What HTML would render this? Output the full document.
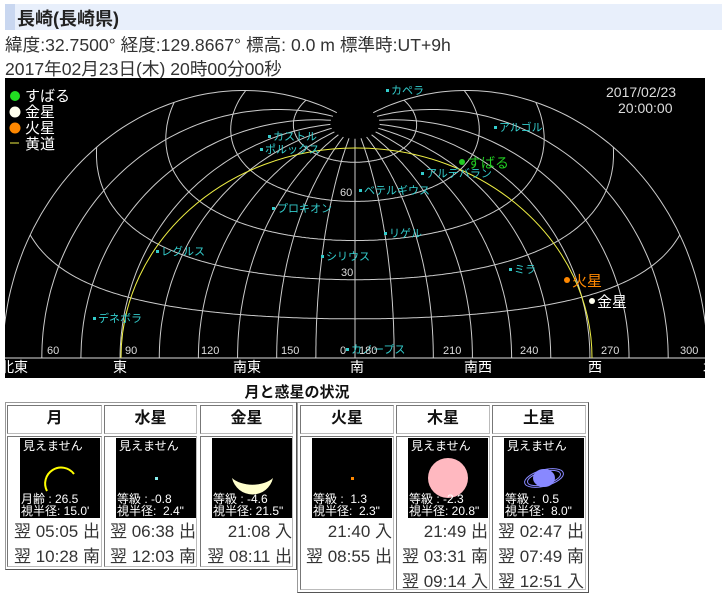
<!DOCTYPE html>
<html><head><meta charset="utf-8">
<style>
*{margin:0;padding:0;box-sizing:border-box}
body{width:722px;height:598px;background:#fff;font-family:"Liberation Sans","Noto Sans CJK JP",sans-serif;color:#333;position:relative;overflow:hidden}
.abs{position:absolute}
#hd{left:5px;top:4px;width:717px;height:26px;background:#e8effb;border-left:10px solid #c9d7f0}
#hd span{position:absolute;left:2px;top:1px;font-size:18px;font-weight:bold;color:#222}
.t{font-size:17.6px;white-space:nowrap}
.box{border:1px solid #999;border-right-color:#555;border-bottom-color:#555}
.cell{position:absolute;border:1px solid #777;border-right-color:#bbb;border-bottom-color:#bbb}
.h{font-size:16px;font-weight:bold;color:#111;text-align:center;line-height:26px}
.img{position:absolute;width:80px;height:80px;background:#000;color:#fff;font-size:12px;line-height:12px;overflow:hidden}
.img .a{position:absolute;left:3px;top:2px;white-space:nowrap}
.img .b{position:absolute;left:1px;top:55px;white-space:nowrap}
.img svg{position:absolute;left:0;top:0}
.r{position:absolute;font-size:17px;color:#333;white-space:nowrap;text-align:right}
</style></head><body>
<div id="hd" class="abs"><span>長崎(長崎県)</span></div>
<div class="abs t" style="left:5px;top:32px">緯度:32.7500° 経度:129.8667° 標高: 0.0 m 標準時:UT+9h</div>
<div class="abs t" style="left:5px;top:56px">2017年02月23日(木) 20時00分00秒</div>

<svg class="abs" style="left:5px;top:78px" width="700" height="300" viewBox="5 78 700 300" font-family="Liberation Sans,Noto Sans CJK JP,sans-serif">
<rect x="5" y="78" width="700" height="300" fill="#000"/>
<g id="grid" fill="none" stroke="#ccc" stroke-width="1"></g>
<line x1="5" y1="358" x2="705" y2="358" stroke="#ddd"/>
<path d="M121 358 C121 242 226 148 356 148 C486 148 592 242 592 358" fill="none" stroke="#ee4" stroke-width="1"/>
<g fill="#3cc" font-size="11">
<rect x="386" y="89" width="3" height="3"/><text x="391" y="94">カペラ</text>
<rect x="494" y="126" width="3" height="3"/><text x="499" y="131">アルゴル</text>
<rect x="268" y="135" width="3" height="3"/><text x="273" y="140">カストル</text>
<rect x="260" y="148" width="3" height="3"/><text x="265" y="153">ポルックス</text>
<rect x="421" y="172" width="3" height="3"/><text x="426" y="177">アルデバラン</text>
<rect x="359" y="189" width="3" height="3"/><text x="364" y="194">ベテルギウス</text>
<rect x="272" y="207" width="3" height="3"/><text x="277" y="212">プロキオン</text>
<rect x="384" y="232" width="3" height="3"/><text x="389" y="237">リゲル</text>
<rect x="156" y="250" width="3" height="3"/><text x="161" y="255">レグルス</text>
<rect x="321" y="255" width="3" height="3"/><text x="326" y="260">シリウス</text>
<rect x="509" y="268" width="3" height="3"/><text x="514" y="273">ミラ</text>
<rect x="93" y="317" width="3" height="3"/><text x="98" y="322">デネボラ</text>
<rect x="346" y="348" width="3" height="3"/><text x="351" y="353">カノープス</text>
</g>
<circle cx="462" cy="162" r="3" fill="#2c2"/><text x="467" y="168" fill="#2c2" font-size="14">すばる</text>
<circle cx="567" cy="280" r="3" fill="#f80"/><text x="572" y="286" fill="#f80" font-size="15">火星</text>
<circle cx="592" cy="301" r="3" fill="#ffe"/><text x="597" y="307" fill="#fff" font-size="15">金星</text>
<g fill="#ddd" font-size="11">
<text x="340" y="196">60</text><text x="341" y="276">30</text>
<text x="47" y="354">60</text><text x="125" y="354">90</text><text x="201" y="354">120</text><text x="281" y="354">150</text><text x="340" y="354">0</text><text x="359" y="354">180</text>
<text x="443" y="354">210</text><text x="520" y="354">240</text><text x="601" y="354">270</text><text x="680" y="354">300</text>
</g>
<g fill="#fff" font-size="14">
<text x="0" y="372">北東</text><text x="113" y="372">東</text><text x="233" y="372">南東</text><text x="350" y="372">南</text><text x="464" y="372">南西</text><text x="588" y="372">西</text><text x="703" y="372">北西</text>
</g>
<g fill="#ddd" font-size="14"><text x="606" y="97">2017/02/23</text><text x="618" y="113">20:00:00</text></g>
<circle cx="15" cy="96" r="5" fill="#2d2"/><circle cx="15" cy="112" r="5.5" fill="#ffe"/><circle cx="15" cy="128" r="5.5" fill="#f80"/>
<line x1="10" y1="143" x2="19" y2="143" stroke="#ee4"/>
<g fill="#fff" font-size="15"><text x="25" y="101">すばる</text><text x="25" y="117">金星</text><text x="25" y="133">火星</text><text x="25" y="149">黄道</text></g>
</svg>

<div class="abs" style="left:0;top:381px;width:594px;text-align:center;font-size:15px;font-weight:bold;color:#111">月と惑星の状況</div>

<div class="abs box" style="left:5px;top:402px;width:292px;height:168px"></div>
<div class="abs box" style="left:297px;top:402px;width:292px;height:191px"></div>

<div class="cell h" style="left:7px;top:405px;width:95px;height:29px">月</div>
<div class="cell h" style="left:104px;top:405px;width:93px;height:29px">水星</div>
<div class="cell h" style="left:200px;top:405px;width:93px;height:29px">金星</div>
<div class="cell h" style="left:300px;top:405px;width:94px;height:29px">火星</div>
<div class="cell h" style="left:396px;top:405px;width:94px;height:29px">木星</div>
<div class="cell h" style="left:492px;top:405px;width:94px;height:29px">土星</div>

<div class="cell" style="left:7px;top:436px;width:95px;height:131px"></div>
<div class="cell" style="left:104px;top:436px;width:93px;height:131px"></div>
<div class="cell" style="left:200px;top:436px;width:93px;height:131px"></div>
<div class="cell" style="left:300px;top:436px;width:94px;height:154px"></div>
<div class="cell" style="left:396px;top:436px;width:94px;height:154px"></div>
<div class="cell" style="left:492px;top:436px;width:94px;height:154px"></div>

<div class="img" style="left:20px;top:438px"><svg width="80" height="80"><path d="M27 53 A16 16 0 0 1 54 36" fill="none" stroke="#ff0" stroke-width="2"/></svg><div class="a">見えません</div><div class="b">月齢 : 26.5<br>視半径: 15.0'</div></div>
<div class="img" style="left:116px;top:438px"><svg width="80" height="80"><rect x="39" y="39" width="3" height="3" fill="#8ee"/></svg><div class="a">見えません</div><div class="b">等級 : -0.8<br>視半径: &nbsp;2.4"</div></div>
<div class="img" style="left:212px;top:438px"><svg width="80" height="80"><path d="M20 40 A21 21 0 0 0 61 40 A24 14 0 0 1 20 40Z" fill="#ffc"/></svg><div class="b">等級 : -4.6<br>視半径: 21.5"</div></div>
<div class="img" style="left:312px;top:438px"><svg width="80" height="80"><rect x="39" y="39" width="3" height="3" fill="#f80"/></svg><div class="b">等級 : &nbsp;1.3<br>視半径: &nbsp;2.3"</div></div>
<div class="img" style="left:408px;top:438px"><svg width="80" height="80"><circle cx="40" cy="40" r="20" fill="#ffb8c0"/></svg><div class="a">見えません</div><div class="b">等級 : -2.3<br>視半径: 20.8"</div></div>
<div class="img" style="left:504px;top:438px"><svg width="80" height="80"><g transform="rotate(-15 40 40)" fill="none" stroke="#88f"><ellipse cx="40" cy="40" rx="20" ry="8"/><ellipse cx="40" cy="40" rx="17" ry="6.5"/></g><ellipse cx="40" cy="40" rx="11" ry="9" fill="#88f"/></svg><div class="a">見えません</div><div class="b">等級 : &nbsp;0.5<br>視半径: &nbsp;8.0"</div></div>

<div class="r" style="left:8px;width:92px;top:517px">翌 05:05 出</div>
<div class="r" style="left:8px;width:92px;top:542px">翌 10:28 南</div>
<div class="r" style="left:105px;width:91px;top:517px">翌 06:38 出</div>
<div class="r" style="left:105px;width:91px;top:542px">翌 12:03 南</div>
<div class="r" style="left:201px;width:91px;top:517px">21:08 入</div>
<div class="r" style="left:201px;width:91px;top:542px">翌 08:11 出</div>
<div class="r" style="left:301px;width:91px;top:517px">21:40 入</div>
<div class="r" style="left:301px;width:91px;top:542px">翌 08:55 出</div>
<div class="r" style="left:397px;width:91px;top:517px">21:49 出</div>
<div class="r" style="left:397px;width:91px;top:542px">翌 03:31 南</div>
<div class="r" style="left:397px;width:91px;top:567px">翌 09:14 入</div>
<div class="r" style="left:493px;width:91px;top:517px">翌 02:47 出</div>
<div class="r" style="left:493px;width:91px;top:542px">翌 07:49 南</div>
<div class="r" style="left:493px;width:91px;top:567px">翌 12:51 入</div>

<script>
(function(){
var K=2.61,CX=355,CY=358,D=Math.PI/180;
function pr(A,h){A*=D;h*=D;var d=-Math.cos(h)*Math.cos(A);d=Math.max(-1,Math.min(1,d));var c=Math.acos(d)/D;var u=-Math.cos(h)*Math.sin(A),v=Math.sin(h);var n=Math.sqrt(u*u+v*v)||1;return [CX+K*c*u/n,CY-K*c*v/n];}
var g=document.getElementById('grid'),s='';
function pl(pts){s+='<polyline points="'+pts.map(function(p){return p[0].toFixed(1)+','+p[1].toFixed(1)}).join(' ')+'"/>';}
[15,30,45,60,75].forEach(function(h){var p=[];for(var A=45;A<=315;A+=1)p.push(pr(A,h));pl(p);});
for(var A=45;A<=315;A+=15){var p=[];for(var h=0;h<=84;h+=1)p.push(pr(A,h));pl(p);}
g.innerHTML=s;
})();
</script>
</body></html>
